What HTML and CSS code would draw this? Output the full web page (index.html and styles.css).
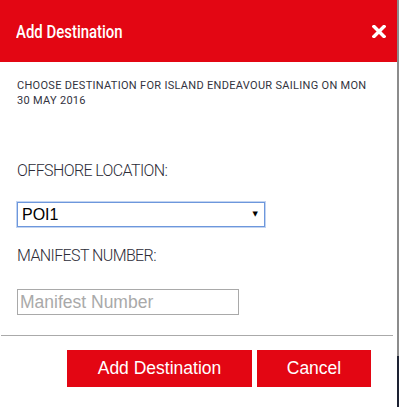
FILE: index.html
```html
<!DOCTYPE html>
<html lang="en">
<head>
<meta charset="utf-8">
<title>Add Destination</title>
<link rel="stylesheet" href="styles.css">
</head>
<body>
<div class="page">
  <div class="dialog">
    <div class="dialog-header">
      <h1 class="dialog-title">Add Destination</h1>
      <button class="close-btn" aria-label="Close">
        <svg width="14" height="13" viewBox="0 0 14 13"><path d="M2 1.5 L12 11.5 M12 1.5 L2 11.5" stroke="#fff" stroke-width="3.4" stroke-linecap="square" fill="none"/></svg>
      </button>
    </div>
    <div class="dialog-body">
      <p class="intro">CHOOSE DESTINATION FOR ISLAND ENDEAVOUR SAILING ON MON 30 MAY 2016</p>
      <label class="field-label">OFFSHORE LOCATION:</label>
      <div class="select-wrap">
        <select class="select"><option>POI1</option></select>
        <span class="select-arrow">&#9660;</span>
      </div>
      <label class="field-label second">MANIFEST NUMBER:</label>
      <input class="text-input" type="text" placeholder="Manifest Number">
    </div>
    <hr class="divider">
    <div class="dialog-footer">
      <button class="btn">Add Destination</button>
      <button class="btn btn-cancel">Cancel</button>
    </div>
  </div>
  <div class="edge"></div>
</div>
</body>
</html>
```
FILE: styles.css
```css
html, body {
  margin: 0;
  padding: 0;
  background: #fff;
}
.page {
  display: flex;
  width: 399px;
  height: 407px;
}
.dialog {
  width: 397px;
  background: #fff;
  display: flex;
  flex-direction: column;
}
.edge {
  width: 2px;
  background: linear-gradient(to bottom, #8c8c8c 0, #8c8c8c 356px, #1d2233 356px);
}
.dialog-header {
  height: 62px;
  background: #e30613;
  display: flex;
  align-items: center;
  justify-content: space-between;
  padding: 0 11px 0 16px;
}
.dialog-title {
  margin: 0;
  color: #fff;
  font-family: Roboto, sans-serif;
  font-weight: 500;
  font-size: 18px;
  transform: scaleX(0.83);
  transform-origin: left center;
  white-space: nowrap;
}
.close-btn {
  background: none;
  border: 0;
  padding: 0;
  width: 14px;
  height: 13px;
  display: flex;
  margin-top: 1px;
}
.dialog-body {
  padding: 16px 0 0 17px;
  display: flex;
  flex-direction: column;
  align-items: flex-start;
}
.intro {
  margin: 0;
  width: 365px;
  font-family: Roboto, sans-serif;
  font-size: 11px;
  line-height: 15px;
  letter-spacing: 0.3px;
  color: #333340;
}
.field-label {
  margin-top: 53px;
  font-family: Roboto, sans-serif;
  font-weight: 300;
  font-size: 16px;
  line-height: 20px;
  letter-spacing: -0.6px;
  color: #2c2c38;
}
.field-label.second {
  margin-top: 19px;
}
.select-wrap {
  position: relative;
  margin-top: 21px;
}
.select {
  appearance: none;
  -webkit-appearance: none;
  width: 248px;
  height: 25px;
  box-sizing: border-box;
  border: 1px solid #6d97dc;
  box-shadow: 0 0 0 1px rgba(120, 160, 225, 0.45);
  border-radius: 0;
  background: #fff;
  padding: 0 0 0 4px;
  font-family: "Liberation Sans", Arial, sans-serif;
  font-size: 16px;
  color: #000;
  outline: none;
}
.select-arrow {
  position: absolute;
  right: 7px;
  top: 7px;
  font-family: "DejaVu Sans", sans-serif;
  font-size: 7px;
  line-height: 10px;
  color: #000;
  pointer-events: none;
}
.text-input {
  margin-top: 23px;
  width: 222px;
  height: 26px;
  box-sizing: border-box;
  border: 1px solid #a9a9a9;
  padding: 0 2px;
  font-family: "Liberation Sans", Arial, sans-serif;
  font-size: 17.5px;
  outline: none;
}
.text-input::placeholder {
  color: #a9a9a9;
}
.divider {
  margin: 20px 4px 0 1px;
  border: 0;
  height: 1px;
  background: #aaa;
}
.dialog-footer {
  display: flex;
  justify-content: flex-end;
  gap: 5px;
  padding: 14px 26px 0 0;
}
.btn {
  height: 37px;
  width: 185px;
  border: 0;
  border-radius: 0;
  background: #e30613;
  color: #fff;
  font-family: "Liberation Sans", Arial, sans-serif;
  font-size: 17.5px;
  padding: 0;
}
.btn-cancel {
  width: 114px;
}
```
